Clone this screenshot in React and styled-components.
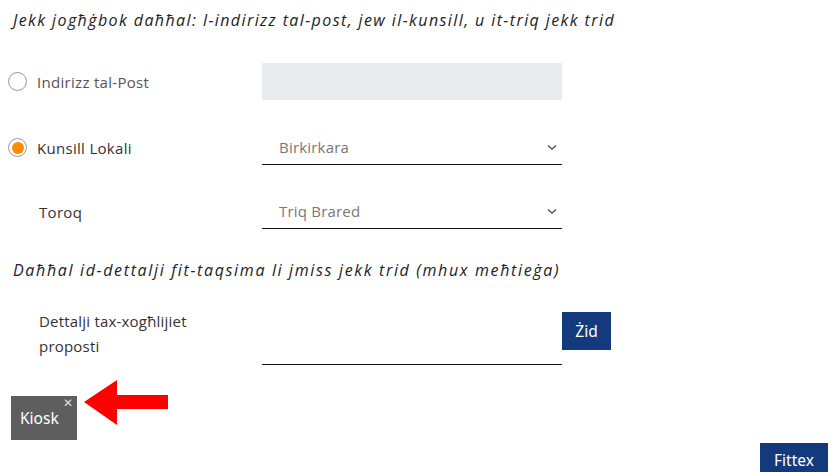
import React from "react";
import styled, { createGlobalStyle } from "styled-components";

const Global = createGlobalStyle`
  html, body { margin: 0; padding: 0; background: #fff; }
  body { font-family: "Open Sans", "Noto Sans", sans-serif; color: #222; }
  * { box-sizing: border-box; }
`;

const Page = styled.div`
  position: relative;
  width: 834px;
  height: 472px;
  overflow: hidden;
  padding: 10px 0 0 0;
`;

const Hint = styled.p`
  margin: 0 0 0 13px;
  font-style: italic;
  font-size: 16px;
  letter-spacing: ${(p) => p.$spacing || 1.4}px;
  line-height: 20px;
  color: #222;
  white-space: nowrap;
  margin-top: ${(p) => p.$top || 0}px;
`;

const Grid = styled.div`
  display: grid;
  grid-template-columns: 262px 300px;
  row-gap: ${(p) => p.$gap || 30}px;
  margin-top: ${(p) => p.$top || 0}px;
`;

const LabelCell = styled.label`
  display: flex;
  align-items: center;
  gap: 10px;
  padding-left: ${(p) => (p.$indent ? 39 : 8)}px;
  font-size: 15px;
  letter-spacing: 0.3px;
  color: ${(p) => (p.$muted ? "#555" : "#333")};
`;

const Radio = styled.span`
  width: 19px;
  height: 19px;
  border-radius: 50%;
  border: 1px solid #999;
  background: #fff;
  display: flex;
  align-items: center;
  justify-content: center;
  flex: none;
  &::after {
    content: "";
    width: 12px;
    height: 12px;
    border-radius: 50%;
    background: ${(p) => (p.$on ? "#ff8c00" : "transparent")};
  }
`;

const GreyBox = styled.div`
  height: 37px;
  background: #e9ecef;
`;

const Select = styled.div`
  height: 35px;
  border-bottom: 1px solid #111;
  display: flex;
  align-items: center;
  justify-content: space-between;
  padding: 0 5px 0 17px;
  font-size: 15px;
  letter-spacing: 0.2px;
  color: #777;
`;

const DetailsRow = styled.div`
  display: grid;
  grid-template-columns: 262px 300px auto;
  margin-top: 32px;
`;

const DetailsLabel = styled.div`
  padding-left: 39px;
  font-size: 15px;
  letter-spacing: 0.2px;
  line-height: 25px;
  color: #333;
  margin-top: -3px;
`;

const Underline = styled.div`
  height: 53px;
  border-bottom: 1px solid #111;
`;

const NavyButton = styled.button`
  border: none;
  background: #133a7c;
  color: #fff;
  font-family: "Noto Sans", sans-serif;
  font-size: 15.5px;
  padding: 0;
  width: ${(p) => p.$w}px;
  height: ${(p) => p.$h}px;
  align-self: start;
`;

const KioskRow = styled.div`
  display: flex;
  align-items: flex-start;
  gap: 6px;
  margin: 31px 0 0 11px;
`;

const Chip = styled.div`
  position: relative;
  width: 66px;
  height: 44px;
  background: #5f5e5e;
  color: #fff;
  font-family: "Noto Sans", sans-serif;
  font-size: 15.5px;
  display: flex;
  align-items: center;
  padding-left: 9px;
`;

const Close = styled.span`
  position: absolute;
  top: 1px;
  right: 4px;
  font-size: 12px;
  color: #ddd;
  line-height: 12px;
`;

const Arrow = styled.svg`
  margin-top: -16px;
  flex: none;
`;

const Footer = styled.div`
  display: flex;
  justify-content: flex-end;
  padding-right: 6px;
  margin-top: 3px;
`;

const Chevron = () => (
  <svg width="10" height="7" viewBox="0 0 10 7">
    <path d="M1 1.5 L5 5.2 L9 1.5" fill="none" stroke="#666" strokeWidth="1.6" />
  </svg>
);

export default function App() {
  return (
    <>
      <Global />
      <Page>
        <Hint>Jekk jogħġbok daħħal: l-indirizz tal-post, jew il-kunsill, u it-triq jekk trid</Hint>
        <Grid $top={33}>
          <LabelCell $muted>
            <Radio />
            Indirizz tal-Post
          </LabelCell>
          <GreyBox />
          <LabelCell>
            <Radio $on />
            Kunsill Lokali
          </LabelCell>
          <Select>
            Birkirkara
            <Chevron />
          </Select>
        </Grid>
        <Grid $top={29}>
          <LabelCell $indent>Toroq</LabelCell>
          <Select>
            Triq Brared
            <Chevron />
          </Select>
        </Grid>
        <Hint $top={31} $spacing={1.65}>Daħħal id-dettalji fit-taqsima li jmiss jekk trid (mhux meħtieġa)</Hint>
        <DetailsRow>
          <DetailsLabel>
            Dettalji tax-xogħlijiet
            <br />
            proposti
          </DetailsLabel>
          <Underline />
          <NavyButton $w={49} $h={38}>Żid</NavyButton>
        </DetailsRow>
        <KioskRow>
          <Chip>
            Kiosk
            <Close>✕</Close>
          </Chip>
          <Arrow width="86" height="48" viewBox="0 0 86 48">
            <polygon points="1,22 34,0 34,15 85,15 85,29 34,29 34,45" fill="#ff0000" />
          </Arrow>
        </KioskRow>
        <Footer>
          <NavyButton $w={68} $h={33}>Fittex</NavyButton>
        </Footer>
      </Page>
    </>
  );
}
